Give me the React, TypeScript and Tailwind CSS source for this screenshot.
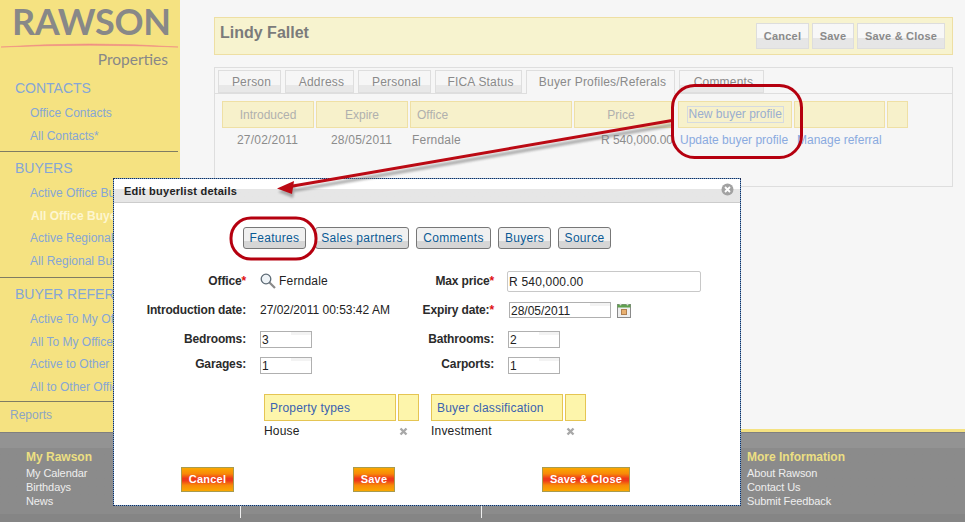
/**
 * Rawson Properties - contact screen with the "Edit buyerlist details" dialog open,
 * annotated with red callouts.
 */

import { ReactNode } from "react";

type NavGroup = {
  title: string;
  height: string;
  links: { label: string; active?: boolean }[];
};

const navGroups: NavGroup[] = [
  {
    title: "CONTACTS",
    height: "h-[80px]",
    links: [{ label: "Office Contacts" }, { label: "All Contacts*" }],
  },
  {
    title: "BUYERS",
    height: "h-[126px]",
    links: [
      { label: "Active Office Buyers" },
      { label: "All Office Buyers", active: true },
      { label: "Active Regional Buyers" },
      { label: "All Regional Buyers" },
    ],
  },
  {
    title: "BUYER REFERRALS",
    height: "h-[124px]",
    links: [
      { label: "Active To My Office" },
      { label: "All To My Office" },
      { label: "Active to Other Offices" },
      { label: "All to Other Offices" },
    ],
  },
];

const tabs = [
  { label: "Person", width: "w-[63px]" },
  { label: "Address", width: "w-[69px]" },
  { label: "Personal", width: "w-[73px]" },
  { label: "FICA Status", width: "w-[87px]" },
  { label: "Buyer Profiles/Referals", width: "w-[149px]", active: true },
  { label: "Comments", width: "w-[85px]" },
];

function Sidebar() {
  return (
    <aside className="w-[180px] shrink-0 bg-[#f5e281] overflow-hidden">
      {/* Logo */}
      <div className="h-[72px]">
        <p className="pl-[12px] pt-[1px] h-[41px] font-['Lato',sans-serif] font-bold text-[36px] leading-[40px] text-[#888888] tracking-[-0.3px]">
          RAWSON
        </p>
        <svg className="block w-[180px] h-[8px]" viewBox="0 0 180 8" aria-hidden="true">
          <path d="M1 6 Q90 0 178 6 Q90 2.5 1 6Z" fill="#f08f84" stroke="#f08f84" strokeWidth="0.6" />
        </svg>
        <p className="pr-[12px] text-right font-['Lato',sans-serif] text-[15.5px] leading-[18px] text-[#888888] mt-[1px]">
          Properties
        </p>
      </div>

      {/* Nav groups */}
      {navGroups.map((group) => (
        <div key={group.title} className={`w-[178px] border-b border-[#7f7c63] ${group.height}`}>
          <p className="pl-[15px] pt-[6px] text-[14px] leading-[20px] text-[#86a6d6] whitespace-nowrap">{group.title}</p>
          <div className="mt-[4px]">
            {group.links.map((link) => (
              <p
                key={link.label}
                className={
                  link.active
                    ? "pl-[31px] h-[22.5px] text-[12px] leading-[22px] font-bold text-[#fdf6d0] whitespace-nowrap"
                    : "pl-[30px] h-[22.5px] text-[12px] leading-[22px] text-[#86a6d6] whitespace-nowrap"
                }
              >
                {link.label}
              </p>
            ))}
          </div>
        </div>
      ))}
      <p className="pl-[10px] pt-[3px] text-[12px] leading-[20px] text-[#8ca5c4]">Reports</p>
    </aside>
  );
}

function TopButton({ children, width }: { children: ReactNode; width: string }) {
  return (
    <button className={`${width} h-[26px] border border-[#dddddd] bg-gradient-to-b from-[#f7f7f7] from-60% to-[#e6e6e6] to-60% text-[11px] font-bold text-[#8a8a8a] tracking-[0.2px]`}>
      {children}
    </button>
  );
}

function HeaderCell({ children, className }: { children?: ReactNode; className: string }) {
  return (
    <div className={`h-[27px] shrink-0 flex items-center bg-[#f7f1cb] border border-[#efe0a5] text-[12px] text-[#b0b0ae] ${className}`}>
      {children}
    </div>
  );
}

function MainPanel() {
  return (
    <main className="flex-1 bg-[#f6f6f6] pl-[34px] pr-[12px] pt-[17px] border-b-[3px] border-[#f5e281]">
      <div className="h-[38px] flex items-center justify-between bg-[#f7f3cf] border border-[#eedfa3] pl-[5px] pr-[7px]">
        <h1 className="text-[16px] font-bold text-[#7b7b7b] pb-[6px]">Lindy Fallet</h1>
        <div className="flex gap-[3px]">
          <TopButton width="w-[53px]">Cancel</TopButton>
          <TopButton width="w-[42px]">Save</TopButton>
          <TopButton width="w-[88px]">Save &amp; Close</TopButton>
        </div>
      </div>

      <div className="mt-[12px] h-[120px] border border-[#dedede]">
        {/* Tabs */}
        <div className="h-[26px] flex gap-[4px] pl-[3px] pt-[2px] border-b border-[#dedede]">
          {tabs.map((tab) => (
            <div
              key={tab.label}
              className={
                tab.active
                  ? `${tab.width} h-[24px] pl-[4px] border border-b-0 border-[#dedede] bg-[#f6f6f6] text-center text-[12px] leading-[22px] text-[#8a8a8a] tracking-[0.2px] whitespace-nowrap`
                  : `${tab.width} h-[23px] pl-[4px] border border-[#dedede] bg-gradient-to-b from-[#f6f6f6] from-65% to-[#e8e8e8] to-65% text-center text-[12px] leading-[22px] text-[#8a8a8a] tracking-[0.2px]`
              }
            >
              {tab.label}
            </div>
          ))}
        </div>

        {/* Buyer profile grid */}
        <div className="flex gap-[2px] pl-[7px] pt-[7px]">
          <HeaderCell className="w-[92px] justify-center">Introduced</HeaderCell>
          <HeaderCell className="w-[92px] justify-center">Expire</HeaderCell>
          <HeaderCell className="w-[162px] pl-[6px]">Office</HeaderCell>
          <HeaderCell className="w-[98px] justify-center pr-[4px]">Price</HeaderCell>
          <HeaderCell className="w-[114px] ml-[4px] justify-center">
            <span className="border border-[#d5dae0] px-[1px] h-[17px] w-[97px] leading-[15px] text-[#9aaed0] whitespace-nowrap">New buyer profile</span>
          </HeaderCell>
          <HeaderCell className="w-[91px]" />
          <HeaderCell className="w-[21px]" />
        </div>
        <div className="flex pl-[7px] mt-[4px] h-[16px] text-[12px] leading-[16px] text-[#8c8c8c] tracking-[0.2px] whitespace-nowrap">
          <span className="w-[94px] pl-[15px]">27/02/2011</span>
          <span className="w-[94px] pl-[15px]">28/05/2011</span>
          <span className="w-[164px] pl-[2px]">Ferndale</span>
          <span className="w-[99px] text-right tracking-normal">R 540,000.00</span>
          <span className="w-[124px] pl-[7px] text-[#8aaadf] tracking-normal">Update buyer profile</span>
          <span className="text-[#8aaadf] tracking-normal">Manage referral</span>
        </div>
      </div>
    </main>
  );
}

function Footer() {
  return (
    <footer className="h-[90px] border-t border-[#7f7f7f] bg-[#858585]">
      <div className="h-[81px] bg-gradient-to-b from-[#939393] from-[19%] to-[#8b8b8b] to-[19%] grid grid-cols-[241px_241px_240px_1fr]">
        <div className="pl-[26px] pt-[17px]">
          <FooterColumn title="My Rawson" links={["My Calendar", "Birthdays", "News"]} />
        </div>
        <div />
        <div />
        <div className="pl-[25px] pt-[17px]">
          <FooterColumn title="More Information" links={["About Rawson", "Contact Us", "Submit Feedback"]} />
        </div>
      </div>
    </footer>
  );
}

function FooterColumn({ title, links }: { title: string; links: string[] }) {
  return (
    <>
      <p className="text-[12px] leading-[14px] font-bold text-[#ecdf82]">{title}</p>
      <div className="mt-[2px]">
        {links.map((link) => (
          <p key={link} className="text-[11px] leading-[14px] text-[#eeeeee] tracking-[-0.1px]">
            {link}
          </p>
        ))}
      </div>
    </>
  );
}

function Tick({ className }: { className: string }) {
  return <span className={`absolute top-[506px] h-[12px] w-px bg-[#eeeeee] ${className}`} />;
}

function DialogTab({ children, className }: { children: ReactNode; className: string }) {
  return (
    <button className={`h-[22px] rounded-[3px] border border-[#777777] bg-gradient-to-b from-[#f0f0f0] from-65% to-[#d6d6d6] to-65% text-[12px] text-[#0b5a94] tracking-[0.3px] ${className}`}>
      {children}
    </button>
  );
}

function FieldLabel({ children, required, className }: { children: ReactNode; required?: boolean; className?: string }) {
  return (
    <label className={`text-right text-[12px] font-bold text-[#2b2b2b] tracking-[-0.15px] whitespace-nowrap ${className ?? ""}`}>
      {children}
      {required && <span className="text-[#e01010]">*</span>}
    </label>
  );
}

function SmallInput({ value, className }: { value: string; className: string }) {
  return (
    <div className={`relative border border-[#b0b0b0] bg-white text-[12px] pl-[1px] text-[#222222] ${className}`}>
      {value}
      <span className="absolute right-0 top-0 w-[20px] h-[3px] bg-[#f3f3f3]" />
    </div>
  );
}

function RemoveIcon() {
  return (
    <svg className="w-[9px] h-[9px]" viewBox="0 0 9 9" aria-hidden="true">
      <path d="M1.5 1.5 7.5 7.5M7.5 1.5 1.5 7.5" stroke="#a8a8a8" strokeWidth="2.4" />
    </svg>
  );
}

function MiniList({ title, item }: { title: string; item: string }) {
  return (
    <div className="w-[155px]">
      <div className="flex gap-[2px]">
        <div className="w-[132px] h-[27px] flex items-center pl-[5px] bg-[#fdf5ab] border border-[#e5c553] text-[12px] text-[#3a63b0] tracking-[0.2px]">
          {title}
        </div>
        <div className="w-[21px] h-[27px] bg-[#fdf5ab] border border-[#e5c553]" />
      </div>
      <div className="flex items-center justify-between pr-[11px] mt-[2px] text-[12px] leading-[16px] text-[#222222] tracking-[0.2px]">
        <span>{item}</span>
        <RemoveIcon />
      </div>
    </div>
  );
}

function OrangeButton({ children, className }: { children: ReactNode; className: string }) {
  return (
    <button className={`h-[25px] border border-[#a89b4f] bg-[linear-gradient(#fba800,#f88a08_25%,#ee3a1a_45%,#ee3a1a_55%,#f88a08_75%,#fba800)] text-[11px] font-bold text-white tracking-[0.2px] ${className}`}>
      {children}
    </button>
  );
}

function Dialog() {
  return (
    <div className="absolute left-[113px] top-[178px] w-[628px] h-[328px] border border-dotted border-[#1c2c55] bg-[#6fa0cf]">
      <div className="h-full bg-white">
        <div className="relative h-[24px] flex items-center pl-[10px] border-b border-[#cccccc] bg-gradient-to-b from-white from-45% to-[#e6e6e6] to-45%">
          <span className="text-[11px] font-bold text-[#222222] tracking-[0.25px] pt-[2px]">Edit buyerlist details</span>
          <svg className="absolute right-[6px] top-[4px] w-[13px] h-[13px]" viewBox="0 0 13 13" aria-hidden="true">
            <circle cx="6.5" cy="6.5" r="6" fill="#a2a2a2" />
            <path d="M4 4 9 9M9 4 4 9" stroke="#ffffff" strokeWidth="1.8" />
          </svg>
        </div>

        {/* Section buttons */}
        <div className="flex gap-[7px] pl-[129px] mt-[24px]">
          <DialogTab className="w-[63px]">Features</DialogTab>
          <DialogTab className="w-[94px] ml-[2px]">Sales partners</DialogTab>
          <DialogTab className="w-[75px]">Comments</DialogTab>
          <DialogTab className="w-[53px]">Buyers</DialogTab>
          <DialogTab className="w-[53px]">Source</DialogTab>
        </div>

        {/* Form */}
        <div className="mt-[18px] grid grid-cols-[132px_126px_94px_1fr] grid-rows-[28px_30px_28px_25px] gap-x-[14px] items-center">
          <FieldLabel required>Office</FieldLabel>
          <div className="flex items-center gap-[3px] text-[12px] text-[#222222] tracking-[0.2px]">
            <svg className="w-[16px] h-[16px]" viewBox="0 0 16 16" aria-hidden="true">
              <path d="M9.5 9.5 15 15" stroke="#8a8a8a" strokeWidth="2.2" />
              <circle cx="6" cy="6" r="4.8" fill="#eef3f7" stroke="#5d6a75" strokeWidth="1.3" />
            </svg>
            Ferndale
          </div>
          <FieldLabel required>Max price</FieldLabel>
          <div className="-ml-[1px] w-[194px] h-[21px] rounded-[2px] border border-[#c8c8c8] bg-white pl-[1px] text-[12px] leading-[20px] text-[#222222] tracking-[0.2px]">
            R 540,000.00
          </div>

          <FieldLabel>Introduction date:</FieldLabel>
          <span className="text-[12px] text-[#222222] whitespace-nowrap">27/02/2011 00:53:42 AM</span>
          <FieldLabel required className="pb-[1px]">Expiry date:</FieldLabel>
          <div className="flex items-center gap-[6px] ml-[1px]">
            <SmallInput value="28/05/2011" className="w-[102px] h-[16px] leading-[17px]" />
            <svg className="w-[14px] h-[15px]" viewBox="0 0 14 15" aria-hidden="true">
              <rect x="0.5" y="1.5" width="13" height="13" fill="#eeeeee" stroke="#8a8a8a" />
              <rect x="0.5" y="1.5" width="13" height="3" fill="#5fa04e" />
              <circle cx="3.5" cy="1.5" r="1" fill="#dddddd" />
              <circle cx="10.5" cy="1.5" r="1" fill="#dddddd" />
              <rect x="4.5" y="6.5" width="5" height="5" fill="#e8b070" stroke="#b08050" />
            </svg>
          </div>

          <FieldLabel>Bedrooms:</FieldLabel>
          <SmallInput value="3" className="w-[52px] h-[17px] leading-[16px]" />
          <FieldLabel>Bathrooms:</FieldLabel>
          <SmallInput value="2" className="w-[52px] h-[17px] leading-[16px]" />

          <FieldLabel className="pb-[3px]">Garages:</FieldLabel>
          <SmallInput value="1" className="w-[52px] h-[17px] leading-[16px]" />
          <FieldLabel className="pb-[3px]">Carports:</FieldLabel>
          <SmallInput value="1" className="w-[52px] h-[17px] leading-[16px]" />
        </div>

        {/* Property types / classification */}
        <div className="flex gap-[12px] pl-[150px] mt-[16px]">
          <MiniList title="Property types" item="House" />
          <MiniList title="Buyer classification" item="Investment" />
        </div>

        {/* Action buttons */}
        <div className="flex pl-[67px] mt-[28px]">
          <OrangeButton className="w-[53px]">Cancel</OrangeButton>
          <OrangeButton className="w-[42px] ml-[119px]">Save</OrangeButton>
          <OrangeButton className="w-[88px] ml-[147px]">Save &amp; Close</OrangeButton>
        </div>
      </div>
    </div>
  );
}

// Red callouts drawn over the whole screenshot
function Annotations() {
  return (
    <svg className="absolute left-0 top-0 w-[965px] h-[522px] pointer-events-none" viewBox="0 0 965 522" aria-hidden="true">
      <defs>
        <filter id="soft" x="-5%" y="-50%" width="110%" height="200%">
          <feGaussianBlur stdDeviation="1.2" />
        </filter>
      </defs>
      <g filter="url(#soft)" opacity="0.55">
        <path d="M290 191 672 125" stroke="#777777" strokeWidth="3.5" fill="none" />
        <path d="M278 192 296 184 293 198Z" fill="#777777" />
      </g>
      <path d="M290 186.5 672 120.5" stroke="#bb0a14" strokeWidth="3" fill="none" />
      <path d="M277 188.5 294 181 292 194Z" fill="#bb0a14" />
      <rect x="672.5" y="85.5" width="129" height="72" rx="22" fill="none" stroke="#b5000f" strokeWidth="3" />
      <rect x="231" y="218" width="85" height="41" rx="20" fill="none" stroke="#b5000f" strokeWidth="3" />
    </svg>
  );
}

export default function App() {
  return (
    <div className="relative w-[965px] h-[522px] overflow-hidden font-['Liberation_Sans',Arial,sans-serif]">
      <div className="flex h-[432px]">
        <Sidebar />
        <MainPanel />
      </div>
      <Footer />
      <Tick className="left-[240px]" />
      <Tick className="left-[481px]" />
      <Dialog />
      <Annotations />
    </div>
  );
}
